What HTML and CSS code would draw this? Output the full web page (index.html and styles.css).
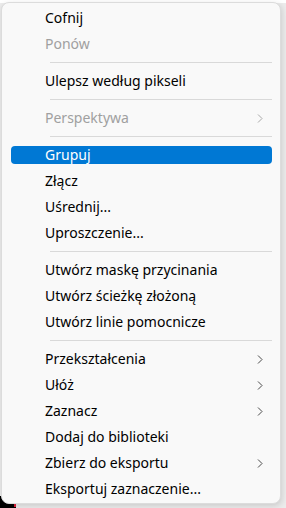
FILE: index.html
```html
<!DOCTYPE html>
<html lang="pl">
<head>
<meta charset="utf-8">
<title>Menu</title>
<link rel="stylesheet" href="styles.css">
</head>
<body>
<div class="backdrop"><div class="dark-corner"></div><div class="red-dot"></div></div>
<div class="menu">
  <div class="item">Cofnij</div>
  <div class="item disabled">Ponów</div>
  <div class="sep"></div>
  <div class="item">Ulepsz według pikseli</div>
  <div class="sep"></div>
  <div class="item disabled"><span>Perspektywa</span><svg class="chev" width="6" height="9" viewBox="0 0 6 9"><polyline points="1,0.5 5,4.5 1,8.5"/></svg></div>
  <div class="sep"></div>
  <div class="item active">Grupuj</div>
  <div class="item">Złącz</div>
  <div class="item">Uśrednij...</div>
  <div class="item">Uproszczenie...</div>
  <div class="sep"></div>
  <div class="item">Utwórz maskę przycinania</div>
  <div class="item">Utwórz ścieżkę złożoną</div>
  <div class="item">Utwórz linie pomocnicze</div>
  <div class="sep"></div>
  <div class="item"><span>Przekształcenia</span><svg class="chev" width="6" height="9" viewBox="0 0 6 9"><polyline points="1,0.5 5,4.5 1,8.5"/></svg></div>
  <div class="item"><span>Ułóż</span><svg class="chev" width="6" height="9" viewBox="0 0 6 9"><polyline points="1,0.5 5,4.5 1,8.5"/></svg></div>
  <div class="item"><span>Zaznacz</span><svg class="chev" width="6" height="9" viewBox="0 0 6 9"><polyline points="1,0.5 5,4.5 1,8.5"/></svg></div>
  <div class="item">Dodaj do biblioteki</div>
  <div class="item"><span>Zbierz do eksportu</span><svg class="chev" width="6" height="9" viewBox="0 0 6 9"><polyline points="1,0.5 5,4.5 1,8.5"/></svg></div>
  <div class="item">Eksportuj zaznaczenie...</div>
</div>
</body>
</html>
```
FILE: styles.css
```css
html, body {
  margin: 0;
  padding: 0;
}
body {
  width: 286px;
  height: 508px;
  overflow: hidden;
  background: #ebebeb;
  position: relative;
  font-family: "Noto Sans", "Open Sans", sans-serif;
}
.backdrop {
  position: absolute;
  inset: 0;
  background: linear-gradient(to bottom, #ffffff 0, #ffffff 3px, #ececec 3px);
}
.dark-corner {
  position: absolute;
  left: 0;
  bottom: 0;
  width: 16px;
  height: 12px;
  background: #000;
}
.red-dot {
  position: absolute;
  left: 14px;
  bottom: 1px;
  width: 2px;
  height: 3px;
  background: #e0203a;
}
.menu {
  position: relative;
  display: flex;
  flex-direction: column;
  margin: 2px 0 0 1px;
  width: 278px;
  height: 498px;
  padding: 2px 0 0 0;
  background: #f9f9f9;
  border: 1px solid #dcdcdc;
  border-radius: 8px;
  box-shadow: 1px 2px 6px rgba(0, 0, 0, 0.14);
  box-sizing: content-box;
}
.item {
  display: flex;
  align-items: center;
  justify-content: space-between;
  flex: none;
  height: 18px;
  margin: 4px 8px 4px 9px;
  padding: 0 9px 0 34px;
  border-radius: 4px;
  font-size: 14px;
  line-height: 18px;
  color: #000;
  white-space: nowrap;
}
.item span {
  display: block;
}
.item.disabled {
  color: #a0a0a0;
}
.item.active {
  background: #0078d4;
  color: #fff;
}
.chev {
  display: block;
  fill: none;
  stroke: #4a4a4a;
  stroke-width: 1;
}
.disabled .chev {
  stroke: #a8a8a8;
}
.sep {
  flex: none;
  height: 1px;
  margin: 5px 8px 5px 48px;
  background: #d9d9d9;
}
```
